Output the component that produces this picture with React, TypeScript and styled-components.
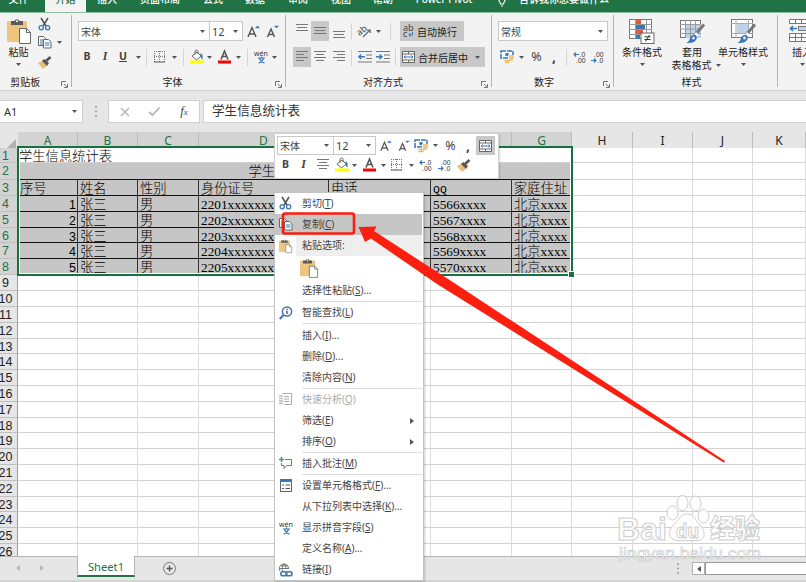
import React from "react";
import styled, { createGlobalStyle } from "styled-components";

const Global = createGlobalStyle`
  * { box-sizing: border-box; }
  body { margin: 0; overflow: hidden; background: #e6e6e6; }
`;

const UI = `"Noto Sans", "Noto Sans CJK SC", sans-serif`;
const CELL = `"Liberation Serif", "Noto Sans CJK SC", serif`;

const App_ = styled.div`
  position: relative;
  width: 806px;
  height: 582px;
  overflow: hidden;
  display: flex;
  flex-direction: column;
  background: #e6e6e6;
  font-family: ${UI};
  font-size: 10px;
  color: #333;
  white-space: nowrap;
  svg { display: block; flex: none; overflow: visible; }
`;

/* ---------- tab strip ---------- */
const TabStrip = styled.div`
  display: flex;
  height: 13px;
  flex: none;
  background: #217346;
  border-bottom: 1px solid #8ebda0;
  overflow: hidden;
`;
const Tab = styled.div<{ $w: number; $active?: boolean }>`
  width: ${(p) => p.$w}px;
  flex: none;
  height: 13px;
  display: flex;
  justify-content: center;
  background: ${(p) => (p.$active ? "#f3f3f3" : "transparent")};
  color: ${(p) => (p.$active ? "#217346" : "#fff")};
  font-weight: 500;
  line-height: 14px;
  span { margin-top: -8px; }
`;

/* ---------- ribbon ---------- */
const Ribbon = styled.div`
  display: flex;
  height: 78px;
  flex: none;
  background: #f3f3f3;
  border-bottom: 1px solid #d2d2d2;
`;
const Group = styled.div<{ $w: number; $pl?: number }>`
  width: ${(p) => p.$w}px;
  flex: none;
  display: grid;
  grid-template-rows: 61px 16px;
  padding-left: ${(p) => p.$pl ?? 0}px;
  background: linear-gradient(#b4b4b4, #b4b4b4) right 2px / 1px 72px no-repeat;
`;
const GroupBody = styled.div`
  display: flex;
  flex-direction: column;
  padding-top: 8px;
  gap: 6px;
`;
const GroupLabel = styled.div`
  display: grid;
  grid-template-columns: 1fr 11px;
  align-items: end;
  text-align: center;
  color: #222;
  line-height: 14px;
  padding-bottom: 1px;
  svg { margin-bottom: 1px; }
`;
const Row = styled.div<{ $h?: number }>`
  display: flex;
  align-items: center;
  height: ${(p) => p.$h ?? 20}px;
`;
const Slot = styled.div<{ $w: number; $on?: boolean }>`
  width: ${(p) => p.$w}px;
  height: 100%;
  flex: none;
  display: flex;
  align-items: center;
  justify-content: center;
  background: ${(p) => (p.$on ? "#c8c8c8" : "transparent")};
`;
const Divider = styled.div`
  width: 1px;
  height: 17px;
  flex: none;
  background: #d4d4d4;
`;
const Combo = styled.div<{ $w: number; $join?: boolean }>`
  width: ${(p) => p.$w}px;
  height: 100%;
  flex: none;
  display: flex;
  align-items: center;
  justify-content: space-between;
  padding: 0 4px 0 2px;
  background: #fff;
  border: 1px solid #c8c8c8;
  border-left-width: ${(p) => (p.$join ? 0 : 1)}px;
  color: #444;
`;
const ComboNumber = styled.span`
  font-size: 11px;
`;
const Toggle = styled.div<{ $w: number }>`
  width: ${(p) => p.$w}px;
  height: 20px;
  flex: none;
  display: flex;
  align-items: center;
  gap: 3px;
  padding: 0 3px 0 2px;
  background: #c8c8c8;
  color: #222;
`;
const Glyph = styled.span<{ $size?: number; $bold?: boolean; $italic?: boolean; $under?: boolean }>`
  font-size: ${(p) => p.$size ?? 10.5}px;
  line-height: 13px;
  margin-top: -1px;
  font-weight: ${(p) => (p.$bold ? 700 : 400)};
  font-style: ${(p) => (p.$italic ? "italic" : "normal")};
  text-decoration: ${(p) => (p.$under ? "underline" : "none")};
  font-family: ${(p) => (p.$italic ? `"Liberation Serif", serif` : UI)};
  color: #444;
`;
const SmallX = styled.span`
  font-size: 9px;
`;
const ClipBody = styled.div`
  display: grid;
  grid-template-columns: 37px 28px;
  padding-top: 5px;
`;
const BigButton = styled.div<{ $w?: number }>`
  width: ${(p) => (p.$w ? p.$w + "px" : "auto")};
  display: flex;
  flex-direction: column;
  align-items: center;
  color: #222;
  line-height: 13px;
`;
const BigLabel = styled.div<{ $tight?: boolean }>`
  margin: 2px 0 ${(p) => (p.$tight ? 0 : 4)}px;
`;
const SmallStack = styled.div`
  display: grid;
  grid-template-rows: 13px 22px 18px;
  align-items: center;
  padding-left: 1px;
`;
const StyleBody = styled.div`
  display: flex;
  padding-top: 6px;
`;
const Line2 = styled.div`
  display: flex;
  align-items: center;
  gap: 4px;
  line-height: 12px;
  margin-left: 8px;
`;

/* ---------- formula bar ---------- */
const FormulaBar = styled.div`
  display: flex;
  height: 41px;
  flex: none;
  padding-top: 9px;
  align-items: flex-start;
`;
const NameBox = styled.div`
  width: 83px;
  height: 23px;
  display: flex;
  align-items: center;
  justify-content: space-between;
  padding: 0 5px 0 4px;
  background: #fff;
  border: 1px solid #cfcfcf;
  border-left: 0;
  font-size: 11px;
`;
const Dots = styled.div`
  width: 25px;
  height: 23px;
  display: flex;
  align-items: center;
  justify-content: center;
`;
const FormulaTools = styled.div`
  width: 92px;
  height: 23px;
  display: flex;
  align-items: center;
  background: #fff;
  border: 1px solid #cfcfcf;
`;
const FormulaInput = styled.div`
  width: 603px;
  height: 23px;
  margin-left: 3px;
  padding-left: 8px;
  background: #fff;
  border: 1px solid #cfcfcf;
  border-right: 0;
  font-size: 12.6px;
  line-height: 19px;
`;

/* ---------- sheet ---------- */
const COLS = "60px 60px 61px 130px 102px 81px 60px 61px 60px 60px 53px";
const Sheet = styled.div`
  position: relative;
  height: 424px;
  flex: none;
  overflow: hidden;
  background: #fff;
`;
const HeadRow = styled.div`
  display: grid;
  grid-template-columns: 18px ${COLS};
  height: 16px;
  background: #e6e6e6;
`;
const Corner = styled.div`
  display: flex;
  align-items: flex-end;
  justify-content: flex-end;
  padding: 0 2px 2px 0;
  border-bottom: 1px solid #b0b0b0;
`;
const ColHead = styled.div<{ $on: boolean }>`
  font-family: "Noto Sans", sans-serif;
  font-size: 12px;
  line-height: 18px;
  text-align: center;
  color: ${(p) => (p.$on ? "#217346" : "#222")};
  background: ${(p) => (p.$on ? "#d3d3d3" : "#e6e6e6")};
  border-right: 1px solid #bcbcbc;
  border-bottom: 1px solid #a9a9a9;
`;
const SheetRow = styled.div<{ $h: number }>`
  display: grid;
  grid-template-columns: 18px ${COLS};
  height: ${(p) => p.$h}px;
`;
const RowHead = styled.div<{ $on: boolean }>`
  display: flex;
  justify-content: center;
  padding-right: 6px;
  overflow: hidden;
  font-family: "Liberation Sans", sans-serif;
  font-size: 12.5px;
  line-height: 17px;
  color: ${(p) => (p.$on ? "#217346" : "#222")};
  background: ${(p) => (p.$on ? "#d3d3d3" : "#e6e6e6")};
  border-right: 1px solid #9c9c9c;
  border-bottom: 1px solid #c0c0c0;
`;
type CellKind = "blank" | "title" | "band" | "data";
const Cell = styled.div<{ $kind: CellKind; $right?: boolean; $span?: number }>`
  grid-column: span ${(p) => p.$span ?? 1};
  overflow: hidden;
  padding: 0 1px 0 ${(p) => (p.$kind === "title" ? 1 : 2)}px;
  font-family: ${CELL};
  font-size: 13.3px;
  line-height: 17px;
  color: #000;
  text-align: ${(p) => (p.$kind === "band" ? "center" : p.$right ? "right" : "left")};
  background: ${(p) => (p.$kind === "data" || p.$kind === "band" ? "#c6c6c6" : "#fff")};
  border-right: 1px solid ${(p) => (p.$kind === "data" ? "#333" : "#dcdcdc")};
  border-bottom: 1px solid ${(p) => (p.$kind === "data" || p.$kind === "band" ? "#111" : "#d2d2d2")};
`;
const Han = styled.span`
  display: inline-block;
  font-family: "Noto Sans CJK SC", sans-serif;
  font-size: 13.3px;
  font-weight: 300;
  line-height: 15px;
  height: 15px;
  vertical-align: top;
`;
const Num = styled.span`
  font-family: "Liberation Sans", sans-serif;
  font-size: 12.5px;
`;
const Narrow = styled.span`
  font-family: "Liberation Mono", monospace;
  font-size: 11.5px;
`;
const Selection = styled.div`
  position: absolute;
  left: 17px;
  top: 14px;
  width: 556px;
  height: 130px;
  border: 2px solid #17713f;
  box-shadow: inset 0 0 0 1px #fff;
`;
const FillHandle = styled.div`
  position: absolute;
  right: -3px;
  bottom: -3px;
  width: 5px;
  height: 5px;
  background: #17713f;
  outline: 1px solid #fff;
`;

/* ---------- bottom bar ---------- */
const BottomBar = styled.div`
  display: flex;
  height: 26px;
  flex: none;
  background: #e6e6e6;
  border-top: 1px solid #b5b5b5;
  border-bottom: 2px solid #d5d5d5;
`;
const NavArrows = styled.div`
  width: 77px;
  height: 22px;
  display: flex;
  align-items: center;
  gap: 20px;
  padding-left: 16px;
`;
const SheetTab = styled.div`
  width: 58px;
  height: 21px;
  margin-top: -1px;
  background: #fff;
  border: 1px solid #b5b5b5;
  border-width: 0 1px;
  border-bottom: 2px solid #217346;
  color: #217346;
  font-size: 11.2px;
  line-height: 21px;
  text-align: center;
`;
const AddSheet = styled.div`
  width: 68px;
  height: 22px;
  display: flex;
  align-items: center;
  justify-content: center;
`;
const ScrollArea = styled.div`
  flex: 1;
  display: flex;
  justify-content: flex-end;
  padding-top: 5px;
`;
const ScrollGrip = styled.div`
  width: 28px;
  height: 13px;
  display: flex;
  align-items: center;
`;
const ScrollButton = styled.div`
  width: 13px;
  height: 13px;
  display: flex;
  align-items: center;
  justify-content: center;
  background: #fff;
  border: 1px solid #b0b0b0;
`;
const ScrollTrack = styled.div`
  width: 101px;
  height: 13px;
  background: #fff;
  border: 1px solid #999;
  border-right: 0;
`;

/* ---------- overlays ---------- */
const MiniToolbar = styled.div`
  position: absolute;
  left: 274px;
  top: 133px;
  width: 225px;
  height: 46px;
  padding: 2px 0 0 2px;
  background: #fff;
  border: 1px solid #d0d0d0;
  box-shadow: 1px 1px 2px rgba(0, 0, 0, 0.15);
`;
const Menu = styled.div`
  position: absolute;
  left: 274px;
  top: 192px;
  width: 150px;
  height: 389px;
  background: #fff;
  border: 1px solid #c3c3c3;
  box-shadow: 1px 1px 2px rgba(0, 0, 0, 0.2);
`;
const MenuItem = styled.div<{ $hot?: boolean; $disabled?: boolean; $head?: boolean; $h?: number }>`
  display: grid;
  grid-template-columns: 21px 1fr 12px;
  align-items: center;
  height: ${(p) => p.$h ?? 21}px;
  margin-right: 1px;
  color: ${(p) => (p.$disabled ? "#aaa" : "#444")};
  background: ${(p) =>
    p.$hot ? "#c6c6c6" : p.$head ? "linear-gradient(to right, #fff 21px, #eee 21px)" : "#fff"};
`;
const MenuIcon = styled.div`
  display: flex;
  justify-content: center;
`;
const MenuText = styled.div`
  padding: 0 0 1px 6px;
  line-height: 16px;
  u { text-underline-offset: 1px; }
`;
const PasteChoice = styled.div`
  padding-left: 4px;
`;
const Separator = styled.div<{ $h?: number }>`
  height: ${(p) => p.$h ?? 1}px;
  margin: 0 1px 0 27px;
  border-top: 1px solid #dcdcdc;
`;
const Annotation = styled.svg`
  position: absolute;
  left: 0;
  top: 0;
  pointer-events: none;
`;

/* ---------- icons ---------- */
const G = "#666";
const B = "#3a76b8";

const Caret = () => (
  <svg width="5" height="3" viewBox="0 0 5 3"><path d="M0 0h5L2.5 3z" fill="#555" /></svg>
);
const Launcher = () => (
  <svg width="7" height="7" viewBox="0 0 7 7">
    <path d="M.5 5V.5H5M3 3l3 3M6.5 3v3.5H3" fill="none" stroke="#777" />
  </svg>
);
const Scissors = () => (
  <svg width="13" height="13" viewBox="0 0 13 13">
    <path d="M3 0l5 8M10 0L5 8" stroke="#555" strokeWidth="1.6" fill="none" />
    <circle cx="3.2" cy="9.8" r="2.1" fill="none" stroke={B} strokeWidth="1.3" />
    <circle cx="9.6" cy="9.8" r="2.1" fill="none" stroke={B} strokeWidth="1.3" />
  </svg>
);
const Copy = () => (
  <svg width="14" height="13" viewBox="0 0 14 13">
    <path d="M.5 .5h5l2 2v7h-7z" fill="#fff" stroke={G} />
    <path d="M2 4h3M2 6h3M2 8h3" stroke={B} />
    <path d="M5.500 3.500h5l2.500 2.500v6h-7.500z" fill="#fff" stroke={G} />
    <path d="M7 7h4.500M7 9h4.500" stroke={B} />
  </svg>
);
const Brush = () => (
  <svg width="14" height="13" viewBox="0 0 14 13">
    <path d="M0 7l4-2 5 5-4 3z" fill="#e9bf78" />
    <path d="M4 5l2-2 5 4-2 3z" fill="#555" />
    <path d="M8 5l4.500-4" stroke="#555" strokeWidth="2.600" />
  </svg>
);
const Clipboard = ({ w, h }: { w: number; h: number }) => (
  <svg width={w} height={h} viewBox="0 0 24 26">
    <rect x="0" y="3" width="20" height="21" rx="1" fill="#edc57f" />
    <path d="M4 3h3.500a2.700 2.700 0 0 1 5 0H16v4H4z" fill="#5a5a5a" />
    <circle cx="10" cy="3.200" r="1" fill="#fff" />
    <path d="M12.500 10.500h7l4 4v11h-11z" fill="#fff" stroke="#666" />
    <path d="M19.500 10.500v4h4" fill="none" stroke="#666" />
  </svg>
);
const GrowFont = ({ down, s = 1 }: { down?: boolean; s?: number }) => (
  <svg width={13 * s} height={13 * s} viewBox="0 0 13 13">
    <path d={down ? "M1.500 12L5 4l3.500 8M2.800 9.500h4.400" : "M1 12L5 2.500 9 12M2.500 9h5"} fill="none" stroke="#555" strokeWidth="1.400" />
    <path d={down ? "M8.500 1h4l-2 2z" : "M8.500 3h4l-2-2.200z"} fill={B} stroke={B} strokeWidth=".5" />
  </svg>
);
const Borders = () => (
  <svg width="12" height="12" viewBox="0 0 12 12">
    <path d="M.5 0v11M5.500 0v11M10.500 0v11M0 .5h11M0 5.500h11" stroke="#777" strokeDasharray="1 1" />
    <path d="M0 11h11" stroke="#555" />
  </svg>
);
const Fill = () => (
  <svg width="14" height="14" viewBox="0 0 14 14">
    <path d="M2 6l5-4 4 4-4.500 4z" fill="#fff" stroke={G} />
    <path d="M5 5V1.500a1.500 1.500 0 0 1 3 0V4" fill="none" stroke={G} />
    <path d="M10 3.500c2.500 0 3 2 2.500 6-1.500-.5-2-2-1.500-4z" fill={B} />
    <rect x="0" y="10.500" width="14" height="3" fill="#ffff00" />
  </svg>
);
const FontColor = () => (
  <svg width="13" height="14" viewBox="0 0 13 14">
    <path d="M3 9.500L6.500 1 10 9.500M4.300 6.500h4.400" fill="none" stroke="#555" strokeWidth="1.600" />
    <rect x="0" y="10.500" width="13" height="3" fill="#f00" />
  </svg>
);
const Wen = () => (
  <svg width="14" height="14" viewBox="0 0 14 14">
    <text x="7" y="5.500" fontSize="7" textAnchor="middle" fill="#333" fontFamily="Noto Sans, sans-serif">wén</text>
    <path d="M4 8h7M7.500 6.500V8M5.500 8.500c1 2.500 3 4 5 4.500M9.500 8.500c-1 2.500-3 4-5 4.500" stroke={B} strokeWidth="1.200" fill="none" />
  </svg>
);
const Lines = ({ kind }: { kind: "top" | "mid" | "bot" | "left" | "center" | "right" }) => {
  const d = {
    top: "M0 .5h12M1 3.500h10M0 6.500h12",
    mid: "M0 3.500h12M1 6.500h10M0 9.500h12",
    bot: "M0 7.500h12M1 10.500h10M0 13.500h12",
    left: "M0 1.500h12M0 4.500h8M0 7.500h12M0 10.500h8",
    center: "M0 1.500h12M2 4.500h8M0 7.500h12M2 10.500h8",
    right: "M0 1.500h12M4 4.500h8M0 7.500h12M4 10.500h8",
  }[kind];
  return <svg width="12" height="14" viewBox="0 0 12 14"><path d={d} stroke="#777" fill="none" /></svg>;
};
const Orient = () => (
  <svg width="14" height="13" viewBox="0 0 14 13">
    <text x="0" y="9" fontSize="9" fill="#444" fontFamily="Noto Sans, sans-serif" transform="rotate(-40 4 8)">ab</text>
    <path d="M5 12l7-7M9 5h3.200v3" stroke={G} strokeWidth="1.200" fill="none" />
  </svg>
);
const Indent = ({ right }: { right?: boolean }) => (
  <svg width="14" height="12" viewBox="0 0 14 12">
    <path d="M0 .5h14M8 4h6M8 7.500h6M0 11h14" stroke="#777" />
    <path d={right ? "M0 5.800h5.500M3.500 3.500l2.500 2.300-2.500 2.300" : "M1 5.800h6M3.200 3.500L.8 5.800l2.400 2.300"} stroke={B} strokeWidth="1.400" fill="none" />
  </svg>
);
const Wrap = () => (
  <svg width="12" height="14" viewBox="0 0 12 14">
    <text x="1" y="7" fontSize="9" fill="#444" fontFamily="Noto Sans, sans-serif">ab</text>
    <text x="1" y="13" fontSize="9" fill="#444" fontFamily="Noto Sans, sans-serif">c</text>
    <path d="M10.500 8v3H7M8.500 9L6.800 11l1.700 1.500" stroke={B} fill="none" />
  </svg>
);
const Merge = () => (
  <svg width="13" height="12" viewBox="0 0 13 12">
    <path d="M.5 .5h12v11H.5zM6.500 .5v2.500M6.500 9v2.500M.5 3h12M.5 9h12" fill="#fff" stroke="#666" />
    <path d="M2 6h9M3.500 4.500L2 6l1.500 1.500M9.500 4.500L11 6 9.500 7.500" stroke={B} fill="none" />
  </svg>
);
const Currency = () => (
  <svg width="15" height="14" viewBox="0 0 15 14">
    <rect x="1" y="1" width="12" height="7" fill="#fff" stroke={B} strokeWidth="1.500" strokeDasharray="5 1" />
    <circle cx="7" cy="4.500" r="1.800" fill={B} />
    <path d="M8 5h7v6h-5v3H4V9h4z" fill="#fff" />
    <path d="M9 6h5M9 8h5M9 10h4M4.500 10.500h5M4.500 12.500h5" stroke="#e9b565" strokeWidth="1.400" />
  </svg>
);
const Decimal = ({ less }: { less?: boolean }) => (
  <svg width="13" height="13" viewBox="0 0 13 13">
    <g fontSize="6.800" fill="#333" fontFamily="Liberation Sans, sans-serif">
      <text x={less ? 3 : 6.5} y="5.500">{less ? ".00" : ".0"}</text>
      <text x={less ? 6.5 : 3} y="12">{less ? ".0" : ".00"}</text>
    </g>
    {less
      ? <path d="M0 9.500h5M3 7.500l2 2-2 2" stroke={B} strokeWidth="1.200" fill="none" />
      : <path d="M1 3.500h5M3 1.500l-2 2 2 2" stroke={B} strokeWidth="1.200" fill="none" />}
  </svg>
);
const CondFormat = () => (
  <svg width="26" height="25" viewBox="0 0 26 25">
    <rect x=".5" y=".5" width="22" height="19" fill="#fff" stroke="#777" />
    <path d="M6.500 0v20M17.500 0v20M0 5.500h23M0 10.500h23M0 15.500h23" stroke="#999" />
    <rect x="7" y="1" width="5" height="4" fill="#e1593b" />
    <rect x="7" y="6" width="9" height="4" fill={B} />
    <rect x="7" y="11" width="7" height="4" fill="#e1593b" />
    <rect x="7" y="16" width="4" height="4" fill={B} />
    <rect x="12" y="14" width="13" height="10.500" fill="#fff" stroke="#666" />
    <path d="M15.500 17.800h6M15.500 20.500h6M20.500 16l-4 6.500" stroke="#333" fill="none" />
  </svg>
);
const PaintBrush = () => (
  <>
    <path d="M24 5.500L15 16" stroke="#777" strokeWidth="3" />
    <path d="M16 13l3 3-2 1.500-2.500-2.500z" fill="#fff" />
    <path d="M14 16c3 0 3.500 3 2 5-2 3-6 3-10 3 3-1 3-2.500 4-5 .8-2 2-3 4-3z" fill={B} />
    <circle cx="13.500" cy="19" r="1.500" fill="#d6e6f5" />
  </>
);
const TableFormat = () => (
  <svg width="25" height="25" viewBox="0 0 25 25">
    <rect x=".5" y="1.500" width="20" height="17" fill="#fff" stroke="#777" />
    <rect x="6" y="6" width="15" height="13" fill="#bcd3ea" />
    <path d="M5.500 1v18M10.500 1v18M15.500 1v18M0 5.500h21M0 10h21M0 14.500h21" stroke="#999" />
    <PaintBrush />
  </svg>
);
const CellStyle = () => (
  <svg width="25" height="25" viewBox="0 0 25 25">
    <rect x=".5" y=".5" width="21" height="18" fill="#fff" stroke="#777" />
    <path d="M5 0v19M17.500 0v19M0 4.500h22M0 14.500h22" stroke="#aaa" />
    <rect x="6" y="5" width="11" height="9" fill="#bcd3ea" />
    <PaintBrush />
  </svg>
);
const InsertCells = () => (
  <svg width="26" height="25" viewBox="0 0 26 25">
    <path d="M.5 .5h24v4H.5zM6.500 .5v4M12.500 .5v4M.5 14.500h24v8H.5zM.5 18.500h24M6.500 14.500v8M12.500 14.500v8" fill="#fff" stroke="#777" />
    <path d="M1 9.500h7M4 7L1.500 9.500 4 12" stroke={B} strokeWidth="1.600" fill="none" />
    <rect x="9.500" y="7.500" width="12" height="4" fill="#bcd3ea" stroke="#777" />
  </svg>
);
const Search = () => (
  <svg width="14" height="14" viewBox="0 0 14 14">
    <circle cx="8" cy="5.500" r="4.600" fill="#fff" stroke={B} strokeWidth="1.500" />
    <path d="M4.500 9L.8 13" stroke={B} strokeWidth="2" />
    <path d="M8 4.800V8M8 2.700V4" stroke="#444" strokeWidth="1.300" />
  </svg>
);
const Quick = () => (
  <svg width="13" height="13" viewBox="0 0 13 13">
    <path d="M3.500 .5h9v11h-7M5 3.500h5M5 6h5M5 8.500h5" fill="none" stroke="#aaa" />
    <path d="M0 3h4M0 5.500h4M0 8h4M0 10.500h4" stroke="#bbb" strokeWidth="1.500" />
  </svg>
);
const Comment = () => (
  <svg width="13" height="13" viewBox="0 0 13 13">
    <path d="M6 2.500h6.500v6H7.500L5 11.500v-3H2.500V6" fill="none" stroke="#777" />
    <path d="M0 2.500h5M2.500 0v5" stroke="#4b9a75" strokeWidth="1.600" />
  </svg>
);
const FormatCells = () => (
  <svg width="12" height="13" viewBox="0 0 12 13">
    <rect x=".5" y=".5" width="11" height="12" fill="#fff" stroke="#666" />
    <rect x="0" y="0" width="12" height="3" fill={B} />
    <path d="M2 6h2M5.500 6H10M2 9.500h2M5.500 9.500H10" stroke="#555" strokeWidth="1.200" />
  </svg>
);
const LinkIcon = () => (
  <svg width="14" height="14" viewBox="0 0 14 14">
    <path d="M1 8a4.600 4.600 0 1 1 8.500-2M.5 5.500h9M2 2.800h7M5 .8C3 3 3 6 3.500 8M5 .8C7 2.500 7 5 7 6" fill="none" stroke="#777" />
    <rect x="1.800" y="8.800" width="6" height="4" rx="2" fill="#fff" stroke={B} strokeWidth="1.600" />
    <rect x="7" y="8.800" width="6" height="4" rx="2" fill="none" stroke={B} strokeWidth="1.600" />
  </svg>
);
const Tri = ({ left, color = "#555" }: { left?: boolean; color?: string }) => (
  <svg width="4" height="6" viewBox="0 0 4 6"><path d={left ? "M4 0v6L0 3z" : "M0 0v6l4-3z"} fill={color} /></svg>
);
const VDots = () => (
  <svg width="2" height="11" viewBox="0 0 2 11"><path d="M0 1h2M0 5.500h2M0 10h2" stroke="#999" strokeWidth="1.500" /></svg>
);

/* ---------- data ---------- */
const tabs: [string, number][] = [
  ["插入", 42], ["页面布局", 64], ["公式", 42], ["数据", 42], ["审阅", 44], ["视图", 42], ["帮助", 42], ["Power Pivot", 80],
];
const letters = "ABCDEFGHIJK".split("");
const heights = [15, 17, 16, 16, 16, 15, 16, 16, 16, 16, 16, 16, 15, 16, 16, 16, 16, 15, 16, 16, 16, 16, 15, 16, 16, 13];
const header = ["序号", "姓名", "性别", "身份证号", "电话", "QQ", "家庭住址"];
const students = [1, 2, 3, 4, 5].map((n) => ({
  n, id: `220${n}xxxxxxxxxxx`, tel: `138${n}xxxxxxx`, qq: `55${65 + n}xxxx`,
}));

type Entry = { text: string; k?: string; tail?: string; icon?: React.ReactNode; hot?: boolean; disabled?: boolean; head?: boolean; sub?: boolean; sep?: number };
const menuTop: Entry[] = [
  { text: "剪切", k: "T", icon: <Scissors /> },
  { text: "复制", k: "C", icon: <Copy />, hot: true },
  { text: "粘贴选项:", icon: <Clipboard w={13} h={14} />, head: true },
];
const menuRest: Entry[] = [
  { text: "选择性粘贴", k: "S", tail: "...", sep: 1 },
  { text: "智能查找", k: "L", icon: <Search />, sep: 2 },
  { text: "插入", k: "I", tail: "..." },
  { text: "删除", k: "D", tail: "..." },
  { text: "清除内容", k: "N", sep: 1 },
  { text: "快速分析", k: "Q", icon: <Quick />, disabled: true },
  { text: "筛选", k: "E", sub: true },
  { text: "排序", k: "O", sub: true, sep: 1 },
  { text: "插入批注", k: "M", icon: <Comment />, sep: 1 },
  { text: "设置单元格格式", k: "F", tail: "...", icon: <FormatCells /> },
  { text: "从下拉列表中选择", k: "K", tail: "..." },
  { text: "显示拼音字段", k: "S", icon: <Wen /> },
  { text: "定义名称", k: "A", tail: "..." },
  { text: "链接", k: "I", icon: <LinkIcon /> },
];

const Item = ({ e }: { e: Entry }) => (
  <>
    <MenuItem $hot={e.hot} $disabled={e.disabled} $head={e.head}>
      <MenuIcon>{e.icon}</MenuIcon>
      <MenuText>{e.text}{e.k && <>(<u>{e.k}</u>)</>}{e.tail}</MenuText>
      {e.sub && <Tri />}
    </MenuItem>
    {e.sep && <Separator $h={e.sep} />}
  </>
);

const Blanks = ({ from }: { from: number }) => (
  <>{letters.slice(from).map((l) => <Cell key={l} $kind="blank" />)}</>
);

const RowCells = ({ index }: { index: number }) => {
  if (index === 0) return <><Cell $kind="title" $span={7}><Han>学生信息统计表</Han></Cell><Blanks from={7} /></>;
  if (index === 1) return <><Cell $kind="band" $span={7}><Han>学生信息统计表</Han></Cell><Blanks from={7} /></>;
  if (index === 2)
    return <>{header.map((h) => <Cell key={h} $kind="data">{h === "QQ" ? <Narrow>{h}</Narrow> : <Han>{h}</Han>}</Cell>)}<Blanks from={7} /></>;
  if (index < 8) {
    const s = students[index - 3];
    return (
      <>
        <Cell $kind="data" $right><Num>{s.n}</Num></Cell>
        <Cell $kind="data"><Han>张三</Han></Cell>
        <Cell $kind="data"><Han>男</Han></Cell>
        <Cell $kind="data">{s.id}</Cell>
        <Cell $kind="data">{s.tel}</Cell>
        <Cell $kind="data">{s.qq}</Cell>
        <Cell $kind="data"><Han>北京</Han>xxxx</Cell>
        <Blanks from={7} />
      </>
    );
  }
  return <Blanks from={0} />;
};

export default function App() {
  return (
    <App_>
      <Global />
      <TabStrip>
        <Tab $w={45}><span>文件&nbsp;&nbsp;&nbsp;</span></Tab>
        <Tab $w={41} $active><span>开始</span></Tab>
        {tabs.map(([t, w]) => <Tab key={t} $w={w}><span>{t}</span></Tab>)}
        <Tab $w={35}>
          <svg width="8" height="8" viewBox="0 0 8 8"><path d="M1 0c0 2 1.500 2 1.500 4h3C5.500 2 7 2 7 0M3 6h2" fill="none" stroke="#fff" strokeWidth="1.200" /></svg>
        </Tab>
        <Tab $w={90}><span>告诉我你想要做什么</span></Tab>
      </TabStrip>

      <Ribbon>
        <Group $w={72}>
          <ClipBody>
            <BigButton><Clipboard w={24} h={26} /><BigLabel>粘贴</BigLabel><Caret /></BigButton>
            <SmallStack>
              <Scissors />
              <Row><Copy /><Slot $w={14}><Caret /></Slot></Row>
              <Brush />
            </SmallStack>
          </ClipBody>
          <GroupLabel><span>剪贴板&nbsp;&nbsp;&nbsp;&nbsp;</span><Launcher /></GroupLabel>
        </Group>

        <Group $w={214} $pl={6}>
          <GroupBody>
            <Row>
              <Combo $w={132}>宋体<Caret /></Combo>
              <Combo $w={33} $join><ComboNumber>12</ComboNumber><Caret /></Combo>
              <Slot $w={20}><GrowFont /></Slot>
              <Slot $w={18}><GrowFont down /></Slot>
            </Row>
            <Row>
              <Slot $w={18}><Glyph $bold>B</Glyph></Slot>
              <Slot $w={18}><Glyph $bold $italic $size={12}>I</Glyph></Slot>
              <Slot $w={18}><Glyph $bold $under>U</Glyph></Slot>
              <Slot $w={13}><Caret /></Slot>
              <Slot $w={2}><Divider /></Slot>
              <Slot $w={25}><Borders /></Slot>
              <Slot $w={4}><Caret /></Slot>
              <Slot $w={14}><Divider /></Slot>
              <Slot $w={13}><Fill /></Slot>
              <Slot $w={13}><Caret /></Slot>
              <Slot $w={17}><FontColor /></Slot>
              <Slot $w={10}><Caret /></Slot>
              <Slot $w={8}><Divider /></Slot>
              <Slot $w={20}><Wen /></Slot>
              <Slot $w={6}><Caret /></Slot>
            </Row>
          </GroupBody>
          <GroupLabel><span>字体&nbsp;&nbsp;&nbsp;</span><Launcher /></GroupLabel>
        </Group>

        <Group $w={206} $pl={7}>
          <GroupBody>
            <Row>
              <Slot $w={18}><Lines kind="top" /></Slot>
              <Slot $w={18} $on><Lines kind="mid" /></Slot>
              <Slot $w={19}><Lines kind="bot" /></Slot>
              <Slot $w={7}><Divider /></Slot>
              <Slot $w={20}><Orient /></Slot>
              <Slot $w={6}><Caret /></Slot>
              <Slot $w={19}><Divider /></Slot>
              <Toggle $w={64}><Wrap />自动换行</Toggle>
            </Row>
            <Row>
              <Slot $w={18} $on><Lines kind="left" /></Slot>
              <Slot $w={18}><Lines kind="center" /></Slot>
              <Slot $w={19}><Lines kind="right" /></Slot>
              <Slot $w={7}><Divider /></Slot>
              <Slot $w={19}><Indent /></Slot>
              <Slot $w={17}><Indent right /></Slot>
              <Slot $w={9}><Divider /></Slot>
              <Toggle $w={85}><Merge />合并后居中<Slot $w={12}><Caret /></Slot></Toggle>
            </Row>
          </GroupBody>
          <GroupLabel><span>对齐方式&nbsp;&nbsp;&nbsp;</span><Launcher /></GroupLabel>
        </Group>

        <Group $w={122} $pl={6}>
          <GroupBody>
            <Row><Combo $w={110}>常规<Caret /></Combo></Row>
            <Row>
              <Slot $w={19}><Currency /></Slot>
              <Slot $w={8}><Caret /></Slot>
              <Slot $w={23}><Glyph $size={12.5}>%</Glyph></Slot>
              <Slot $w={12}><Glyph $bold $size={14}>,</Glyph></Slot>
              <Slot $w={13}><Divider /></Slot>
              <Slot $w={13}><Decimal /></Slot>
              <Slot $w={23}><Decimal less /></Slot>
            </Row>
          </GroupBody>
          <GroupLabel><span>数字&nbsp;&nbsp;&nbsp;&nbsp;&nbsp;</span><Launcher /></GroupLabel>
        </Group>

        <Group $w={164} $pl={2}>
          <StyleBody>
            <BigButton $w={52}><CondFormat /><BigLabel>条件格式</BigLabel><Caret /></BigButton>
            <BigButton $w={48}>
              <TableFormat /><BigLabel $tight>套用</BigLabel>
              <Line2>表格格式<Caret /></Line2>
            </BigButton>
            <BigButton $w={54}><CellStyle /><BigLabel>单元格样式</BigLabel><Caret /></BigButton>
          </StyleBody>
          <GroupLabel><span>样式</span></GroupLabel>
        </Group>

        <Group $w={60} $pl={12}>
          <StyleBody>
            <BigButton $w={24}><InsertCells /><BigLabel>插入</BigLabel><Caret /></BigButton>
          </StyleBody>
        </Group>
      </Ribbon>

      <FormulaBar>
        <NameBox>A1<Caret /></NameBox>
        <Dots><VDots /></Dots>
        <FormulaTools>
          <Slot $w={31}><svg width="10" height="10" viewBox="0 0 10 10"><path d="M1 1l8 8M9 1L1 9" stroke="#b5b5b5" strokeWidth="1.400" /></svg></Slot>
          <Slot $w={28}><svg width="11" height="9" viewBox="0 0 11 9"><path d="M0 5l3.500 3L10.500 .5" fill="none" stroke="#b5b5b5" strokeWidth="1.800" /></svg></Slot>
          <Slot $w={32}><Glyph $italic $size={13}>f<SmallX>x</SmallX></Glyph></Slot>
        </FormulaTools>
        <FormulaInput>学生信息统计表</FormulaInput>
      </FormulaBar>

      <Sheet>
        <HeadRow>
          <Corner><svg width="9" height="9" viewBox="0 0 9 9"><path d="M9 0v9H0z" fill="#b1b1b1" /></svg></Corner>
          {letters.map((l, i) => <ColHead key={l} $on={i < 7}>{l}</ColHead>)}
        </HeadRow>
        {heights.map((h, i) => (
          <SheetRow key={i} $h={h}>
            <RowHead $on={i < 8}>{i + 1}</RowHead>
            <RowCells index={i} />
          </SheetRow>
        ))}
        <Selection><FillHandle /></Selection>
      </Sheet>

      <BottomBar>
        <NavArrows><Tri left color="#bbb" /><Tri color="#bbb" /></NavArrows>
        <SheetTab>Sheet1</SheetTab>
        <AddSheet>
          <svg width="13" height="13" viewBox="0 0 13 13"><circle cx="6.500" cy="6.500" r="6" fill="none" stroke="#777" /><path d="M3.500 6.500h6M6.500 3.500v6" stroke="#555" strokeWidth="1.400" /></svg>
        </AddSheet>
        <ScrollArea>
          <ScrollGrip><Slot $w={28}><VDots /></Slot></ScrollGrip>
          <ScrollButton><Tri left /></ScrollButton>
          <ScrollTrack />
        </ScrollArea>
      </BottomBar>

      <Annotation width="806" height="582" viewBox="0 0 806 582">
        <g fill="#fff" fillOpacity=".75" stroke="#cdcdcd" strokeWidth="1">
          <g fontFamily="Liberation Sans, Noto Sans CJK SC, sans-serif" fontWeight="700">
            <text x="617" y="540" fontSize="32" textLength="50" lengthAdjust="spacingAndGlyphs">Bai</text>
            <text x="710" y="538" fontSize="26" textLength="50" lengthAdjust="spacingAndGlyphs" fontFamily="Noto Sans CJK SC, sans-serif" fontWeight="900">经验</text>
            <text x="619" y="559" fontSize="17" strokeWidth=".7" textLength="142" lengthAdjust="spacingAndGlyphs" fontWeight="400">jingyan.baidu.com</text>
          </g>
          <ellipse cx="672.500" cy="513" rx="5.500" ry="7" />
          <ellipse cx="682.500" cy="503" rx="5.500" ry="7.500" />
          <ellipse cx="695.500" cy="503.500" rx="5.500" ry="7.500" />
          <ellipse cx="703.500" cy="516" rx="5.500" ry="7" />
          <path d="M687 514c7 0 8 6 13 11s7 15-3 15.500c-5 0-15 .5-20 0-10-1-9-11-3-16s6-10.500 13-10.500z" />
          <text x="676" y="538" fontSize="20" fontWeight="700" fontFamily="Liberation Sans, sans-serif" textLength="23" lengthAdjust="spacingAndGlyphs">du</text>
        </g>
      </Annotation>

      <MiniToolbar>
        <Row $h={19}>
          <Combo $w={57}>宋体<Caret /></Combo>
          <Combo $w={42} $join><ComboNumber>12</ComboNumber><Caret /></Combo>
          <Slot $w={20}><GrowFont s={0.9} /></Slot>
          <Slot $w={16}><GrowFont down s={0.9} /></Slot>
          <Slot $w={19}><Currency /></Slot>
          <Slot $w={8}><Caret /></Slot>
          <Slot $w={23}><Glyph $size={12.5}>%</Glyph></Slot>
          <Slot $w={12}><Glyph $bold $size={14}>,</Glyph></Slot>
          <Slot $w={2} />
          <Slot $w={19} $on><Merge /></Slot>
        </Row>
        <Row>
          <Slot $w={17}><Glyph $bold>B</Glyph></Slot>
          <Slot $w={19}><Glyph $bold $italic $size={12}>I</Glyph></Slot>
          <Slot $w={20}><Lines kind="center" /></Slot>
          <Slot $w={17}><Fill /></Slot>
          <Slot $w={9}><Caret /></Slot>
          <Slot $w={20}><FontColor /></Slot>
          <Slot $w={8}><Caret /></Slot>
          <Slot $w={20}><Borders /></Slot>
          <Slot $w={8}><Caret /></Slot>
          <Slot $w={20}><Decimal /></Slot>
          <Slot $w={18}><Decimal less /></Slot>
          <Slot $w={21}><Brush /></Slot>
        </Row>
      </MiniToolbar>

      <Menu>
        {menuTop.map((e) => <Item key={e.text} e={e} />)}
        <MenuItem $h={24}>
          <span />
          <PasteChoice><Clipboard w={18} h={20} /></PasteChoice>
        </MenuItem>
        {menuRest.map((e) => <Item key={e.text} e={e} />)}
      </Menu>

      <Annotation width="806" height="582" viewBox="0 0 806 582">
        <rect x="283" y="213.500" width="71" height="20" rx="2" fill="none" stroke="#fb1f10" strokeWidth="2.600" />
        <path d="M358.500 227l18-.5-2.500 4.500L455 283.500 725 461l-1 1.800L437 284l-66-45.500-6 3.500z" fill="#fb1f10" />
      </Annotation>
    </App_>
  );
}
